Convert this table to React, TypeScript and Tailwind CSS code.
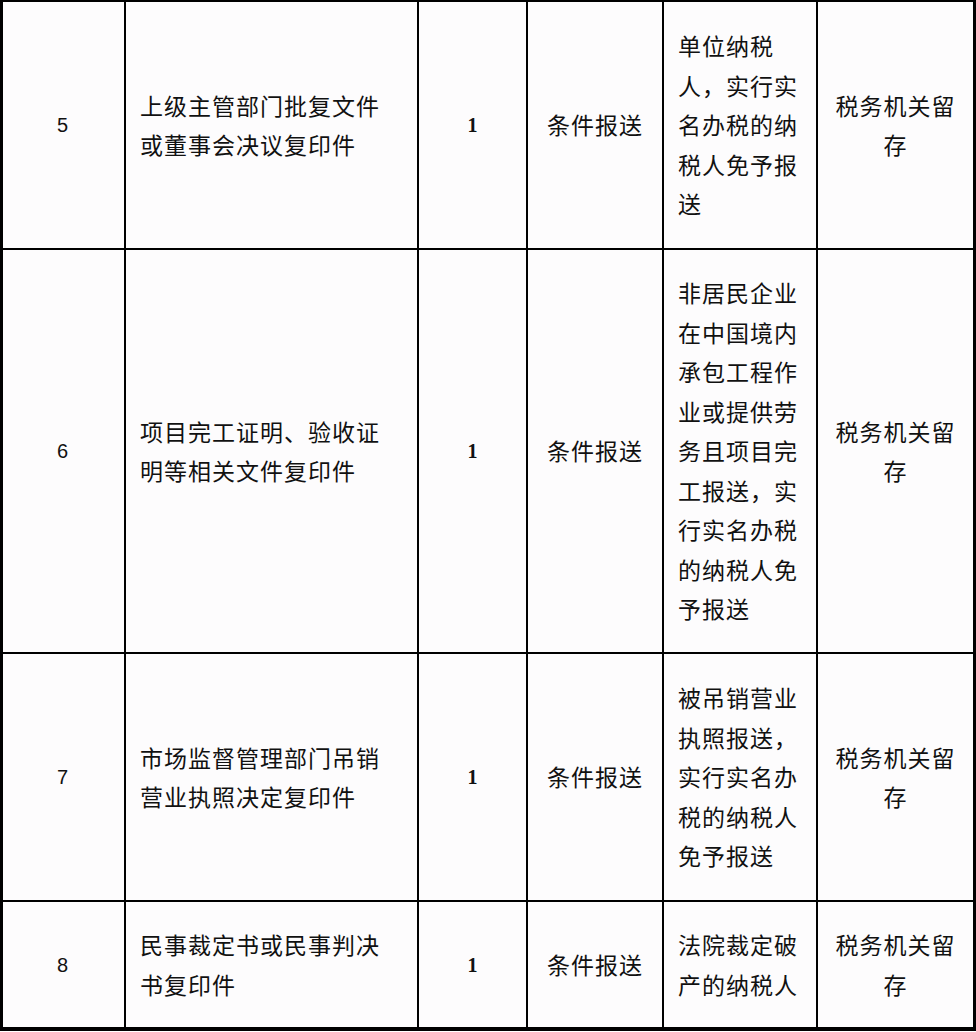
import React from "react";

type Row = {
  no: string;
  name: string[];
  cond: string[];
  height: string;
  last?: boolean;
};

const ROWS: Row[] = [
  {
    no: "5",
    name: ["上级主管部门批复文件", "或董事会决议复印件"],
    cond: ["单位纳税", "人，实行实", "名办税的纳", "税人免予报", "送"],
    height: "h-[248px]",
  },
  {
    no: "6",
    name: ["项目完工证明、验收证", "明等相关文件复印件"],
    cond: [
      "非居民企业",
      "在中国境内",
      "承包工程作",
      "业或提供劳",
      "务且项目完",
      "工报送，实",
      "行实名办税",
      "的纳税人免",
      "予报送",
    ],
    height: "h-[404px]",
  },
  {
    no: "7",
    name: ["市场监督管理部门吊销", "营业执照决定复印件"],
    cond: ["被吊销营业", "执照报送，", "实行实名办", "税的纳税人", "免予报送"],
    height: "h-[248px]",
  },
  {
    no: "8",
    name: ["民事裁定书或民事判决", "书复印件"],
    cond: ["法院裁定破", "产的纳税人"],
    height: "h-[129px]",
    last: true,
  },
];

const cjk = "font-['Noto_Sans_CJK_SC',sans-serif] text-[23px] tracking-[1px] leading-[39.5px] text-[#111]";

export default function App() {
  return (
    <div className="w-[976px] min-h-[1032px] bg-white">
      <div className="grid grid-cols-[123px_293px_109px_136px_154px_158px] border-l-[3px] border-t-2 border-black bg-[#fdfcfd]">
        {ROWS.map((r) => {
          const cell = `${r.height} border-r-2 ${r.last ? "border-b-[4px]" : "border-b-2"} border-black flex items-center`;
          return (
            <React.Fragment key={r.no}>
              <div className={`${cell} justify-center pr-[2px] font-['Liberation_Sans',sans-serif] text-[20px] text-[#111]`}>
                {r.no}
              </div>
              <div className={`${cell} pl-[14px] ${cjk}`}>
                <div>
                  {r.name.map((l) => (
                    <div key={l}>{l}</div>
                  ))}
                </div>
              </div>
              <div className={`${cell} justify-center font-['Liberation_Serif',serif] text-[20px] font-bold text-[#111]`}>
                1
              </div>
              <div className={`${cell} justify-center ${cjk}`}>条件报送</div>
              <div className={`${cell} pl-[14px] ${cjk}`}>
                <div>
                  {r.cond.map((l, i) => (
                    <div key={i}>{l}</div>
                  ))}
                </div>
              </div>
              <div className={`${cell} justify-center text-center ${cjk} border-r-[3px]`}>
                <div>
                  <div>税务机关留</div>
                  <div>存</div>
                </div>
              </div>
            </React.Fragment>
          );
        })}
      </div>
    </div>
  );
}
